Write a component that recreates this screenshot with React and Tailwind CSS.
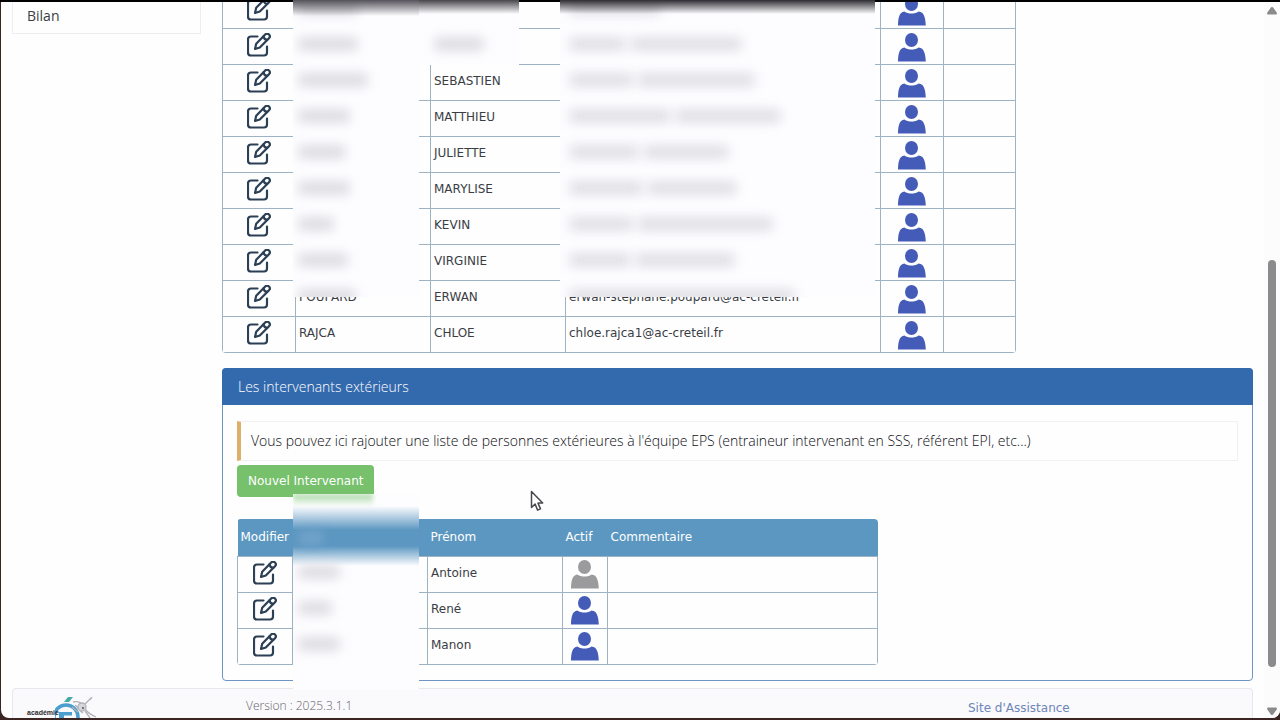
const verdana = "font-['DejaVu_Sans',sans-serif] font-normal";

const teachers = [
  { first: '', last: '', mail: '' },
  { first: '', last: '', mail: '' },
  { first: 'SEBASTIEN', last: '', mail: '' },
  { first: 'MATTHIEU', last: '', mail: '' },
  { first: 'JULIETTE', last: '', mail: '' },
  { first: 'MARYLISE', last: '', mail: '' },
  { first: 'KEVIN', last: '', mail: '' },
  { first: 'VIRGINIE', last: '', mail: '' },
  { first: 'ERWAN', last: 'POUPARD', mail: 'erwan-stephane.poupard@ac-creteil.fr' },
  { first: 'CHLOE', last: 'RAJCA', mail: 'chloe.rajca1@ac-creteil.fr' },
];

const externals = [
  { first: 'Antoine', active: false },
  { first: 'René', active: true },
  { first: 'Manon', active: true },
];

const lastNameSmudges = [58, 58, 68, 50, 46, 50, 34, 48];
const mailSmudges = [[90, 0], [55, 110], [62, 116], [100, 104], [68, 84], [72, 88], [62, 134], [60, 98]];

function EditIcon() {
  return (
    <svg viewBox="0 0 24 24" className="size-6" fill="none" stroke="#2b3f55" strokeWidth="2.2" strokeLinecap="round" strokeLinejoin="round">
      <path d="M10.500 3.500H4a3 3 0 0 0-3 3v13a3 3 0 0 0 3 3h13a3 3 0 0 0 3-3v-6" />
      <path d="M8 16l1.200-5.200 9-9.200a2.600 2.600 0 0 1 3.800 3.700l-9.200 9.200z" />
      <path d="M16.600 3.300c.2 2 1.600 3.400 3.600 3.600" />
    </svg>
  );
}

function PersonIcon({ active = true }) {
  return (
    <svg viewBox="0 0 29 29" className="size-[29px]" fill={active ? '#445cb8' : '#9b9a9c'}>
      <ellipse cx="13.500" cy="7" rx="6.500" ry="7" />
      <path d="M0 28.500C.1 22 1 14.800 6.500 14.500c3.500 2.800 10.500 2.800 14 0 6 .2 7 7.500 7.300 14z" />
    </svg>
  );
}

function IconButton({ label, children }) {
  return (
    <button type="button" aria-label={label} className="mx-auto flex items-center justify-center">
      {children}
    </button>
  );
}

function LogoMark() {
  return (
    <svg viewBox="0 0 46 24" className="h-6 w-[46px]" fill="none" aria-hidden="true">
      <path d="M9 5l4-5h5l-4 5z" fill="#45a9a5" />
      <circle cx="11" cy="20" r="12" stroke="#4b9fd0" strokeWidth="3.500" />
      <path d="M4 24v-9h13v3.500H9V24z" fill="#4b9fd0" />
      <g stroke="#b4b2b8" strokeWidth="1.300">
        <path d="M18 5c5-1 9 1 11 5M28 9l8-8M30 12c3 4 6 6 11 8M20 8c3 2 4 6 8 8" />
        <circle cx="27" cy="10" r="4" fill="#d8d7db" />
        <path d="M30 14l5 7M35 3l2-3M17 10l6 5" />
      </g>
      <circle cx="28" cy="11" r="1.200" fill="#76757a" />
    </svg>
  );
}

const cell = 'border border-[#9db3c4] px-[3px]';
const raised = `${cell} pb-[3px]`;

export default function App() {
  return (
    <div className="relative flex h-screen flex-col overflow-hidden bg-[#3b2523] font-['Open_Sans',sans-serif] font-light text-[#3a3d44]">
      <div className="h-0.5 shrink-0 bg-black" />
      <div className="mb-0.5 ml-px flex min-h-0 flex-1 overflow-hidden rounded-b-lg bg-[#fefeff]">
        <div className="flex min-w-0 flex-1 flex-col px-[11px]">
          <div className="-mt-2.5 flex items-start gap-[21px]">
            <nav className="w-[189px] shrink-0 border border-[#eeeef0] px-3.5 pb-1.5 pt-3">
              <a href="#bilan" className="block text-sm font-normal leading-[22px]">Bilan</a>
            </nav>
            <main className="min-w-0 flex-1">
              <div className="w-[794px] overflow-hidden rounded-b">
                <table className={`${verdana} w-full table-fixed border-collapse text-xs`}>
                  <colgroup>
                    <col className="w-[73px]" />
                    <col className="w-[135px]" />
                    <col className="w-[135px]" />
                    <col className="w-[315px]" />
                    <col className="w-[63px]" />
                    <col className="w-[72px]" />
                  </colgroup>
                  <tbody>
                    {teachers.map((t, i) => (
                      <tr key={i} className="h-9">
                        <td className={raised}><IconButton label="Modifier"><EditIcon /></IconButton></td>
                        <td className={raised}>{t.last}</td>
                        <td className={raised}>{t.first}</td>
                        <td className={raised}>{t.mail}</td>
                        <td className={`${cell} pt-0.5`}><IconButton label="Actif"><PersonIcon /></IconButton></td>
                        <td className={cell} />
                      </tr>
                    ))}
                  </tbody>
                </table>
              </div>

              <section className="mt-[15px] rounded border border-[#6f93c2]">
                <h2 className="-mx-px -mt-px rounded-t bg-[#336aad] px-4 py-2 text-sm font-light leading-[21px] text-white">Les intervenants extérieurs</h2>
                <div className="px-3.5 pb-[15px] pt-4">
                  <p className="border border-l-4 border-[#f1f1f3] border-l-[#deae6b] px-2.5 py-2 text-sm leading-[22px] text-[#0c0d10]">
                    Vous pouvez ici rajouter une liste de personnes extérieures à l'équipe EPS (entraineur intervenant en SSS, référent EPI, etc...)
                  </p>
                  <button type="button" className={`${verdana} mt-1 block h-8 rounded-sm bg-[#77c06c] px-[11px] text-xs text-white`}>Nouvel Intervenant</button>
                  <div className="mt-[22px] w-[641px] overflow-hidden rounded">
                    <table className={`${verdana} w-full table-fixed border-collapse text-xs`}>
                      <colgroup>
                        <col className="w-[55px]" />
                        <col className="w-[135px]" />
                        <col className="w-[135px]" />
                        <col className="w-[45px]" />
                        <col className="w-[270px]" />
                      </colgroup>
                      <thead>
                        <tr className="h-[37px] bg-[#5c97c1] text-left text-white">
                          <th className="px-[3px] font-normal">Modifier</th>
                          <th className="px-[3px] font-normal">Nom</th>
                          <th className="px-[3px] font-normal">Prénom</th>
                          <th className="px-[3px] font-normal">Actif</th>
                          <th className="px-[3px] font-normal">Commentaire</th>
                        </tr>
                      </thead>
                      <tbody>
                        {externals.map((p) => (
                          <tr key={p.first} className="h-9">
                            <td className={raised}><IconButton label="Modifier"><EditIcon /></IconButton></td>
                            <td className={raised} />
                            <td className={raised}>{p.first}</td>
                            <td className={cell}><IconButton label="Actif"><PersonIcon active={p.active} /></IconButton></td>
                            <td className={cell} />
                          </tr>
                        ))}
                      </tbody>
                    </table>
                  </div>
                </div>
              </section>
            </main>
          </div>
          <footer className="mt-[7px] flex min-h-0 flex-1 items-start overflow-hidden rounded-t-sm border border-b-0 border-[#e9e6ee] bg-[#faf9fc] pl-3.5">
            <div className="relative w-[219px] shrink-0 pt-[19px]">
              <div className="absolute left-7 top-2"><LogoMark /></div>
              <p className="relative font-['Liberation_Sans',sans-serif] text-[7px] font-bold leading-[10px] text-[#2c2c30]">académie</p>
            </div>
            <p className="w-[722px] pt-[7px] text-xs leading-5 text-[#66656b]">Version : 2025.3.1.1</p>
            <a href="#assistance" className={`${verdana} pt-[9px] text-xs leading-5 text-[#6c87b8]`}>Site d'Assistance</a>
          </footer>
        </div>
        <div className="flex w-4 shrink-0 flex-col items-center bg-[#fcfcfd] pb-[3px] pt-[5px]" aria-hidden="true">
          <svg viewBox="0 0 10 8" className="h-2 w-2.5" fill="#8b8a8c"><path d="M5 0q1 0 1.500 1L10 6q0 1.500-1 1.500H1Q0 7.500 0 6l3.500-5Q4 0 5 0z" /></svg>
          <div className="mt-[245px] w-2 flex-1 rounded-full bg-[#8b8a8c]" />
          <svg viewBox="0 0 10 8" className="mt-10 h-2 w-2.5 rotate-180" fill="#8b8a8c"><path d="M5 0q1 0 1.500 1L10 6q0 1.500-1 1.500H1Q0 7.500 0 6l3.500-5Q4 0 5 0z" /></svg>
        </div>
      </div>

      <div className="absolute left-[293px] top-0 h-[297px] w-[126px] overflow-hidden bg-[#fdfdff]" aria-hidden="true">
        <div className="-mt-2.5 flex flex-col">
          {lastNameSmudges.map((w, i) => (
            <div key={i} className="flex h-9 items-center pl-1.5">
              <div className="h-3 bg-[#d8d8de] blur-[6px]" style={{ width: w }} />
            </div>
          ))}
          <div className="ml-1.5 mt-3 h-3 w-14 bg-[#d8d8de] blur-[6px]" />
        </div>
        <div className="absolute inset-x-0 top-0 h-4 bg-linear-to-b from-[#55535a] to-transparent" />
      </div>
      <div className="absolute left-[419px] top-0 h-[65px] w-[100px] overflow-hidden bg-[#fdfdff]" aria-hidden="true">
        <div className="ml-4 mt-[38px] h-3 w-12 bg-[#d8d8de] blur-[6px]" />
        <div className="absolute inset-x-0 top-0 h-3.5 bg-linear-to-b from-[#48464c] to-transparent" />
      </div>
      <div className="absolute left-[560px] top-0 h-[297px] w-[315px] overflow-hidden bg-[#fdfdff]" aria-hidden="true">
        <div className="-mt-2.5 flex flex-col">
          {mailSmudges.map(([a, b], i) => (
            <div key={i} className="flex h-9 items-center gap-1.5 pl-2.5">
              <div className="h-3 bg-[#dcdce2] blur-[6px]" style={{ width: a }} />
              <div className="h-3 bg-[#dcdce2] blur-[6px]" style={{ width: b }} />
            </div>
          ))}
          <div className="ml-2.5 mt-3 h-3 w-56 bg-[#dcdce2] blur-[6px]" />
        </div>
        <div className="absolute inset-x-0 top-0 h-3.5 bg-linear-to-b from-[#2f2d33] to-transparent" />
      </div>
      <div className="absolute left-[293px] top-[494px] h-[196px] w-[126px] overflow-hidden bg-[#fdfdff]" aria-hidden="true">
        <div className="h-3 w-20 bg-linear-to-b from-[#a9d8a2] to-transparent blur-[2px]" />
        <div className="h-6 bg-linear-to-b from-transparent to-[#5c97c1]" />
        <div className="flex h-4 items-center bg-[#5c97c1] pl-1.5"><div className="h-4 w-6 bg-[#6fa2ca] blur-[5px]" /></div>
        <div className="h-5 bg-linear-to-b from-[#5c97c1] to-transparent" />
        <div className="-mt-3 flex flex-col">
          <div className="flex h-9 items-center pl-1.5"><div className="h-3 w-10 bg-[#d8d8de] blur-[6px]" /></div>
          <div className="flex h-9 items-center pl-1.5"><div className="h-3 w-8 bg-[#d8d8de] blur-[6px]" /></div>
          <div className="flex h-9 items-center pl-1.5"><div className="h-3 w-10 bg-[#d8d8de] blur-[6px]" /></div>
        </div>
      </div>

      <svg viewBox="0 0 14 22" className="absolute left-[530px] top-[490px] h-[22px] w-3.5" fill="#fff" stroke="#4a484e" strokeWidth="1.500" strokeLinejoin="round" aria-hidden="true">
        <path d="M1.500 1.500v16l3.600-3.400 2.500 6 2.900-1.200-2.500-5.800h4.700z" />
      </svg>
    </div>
  );
}
